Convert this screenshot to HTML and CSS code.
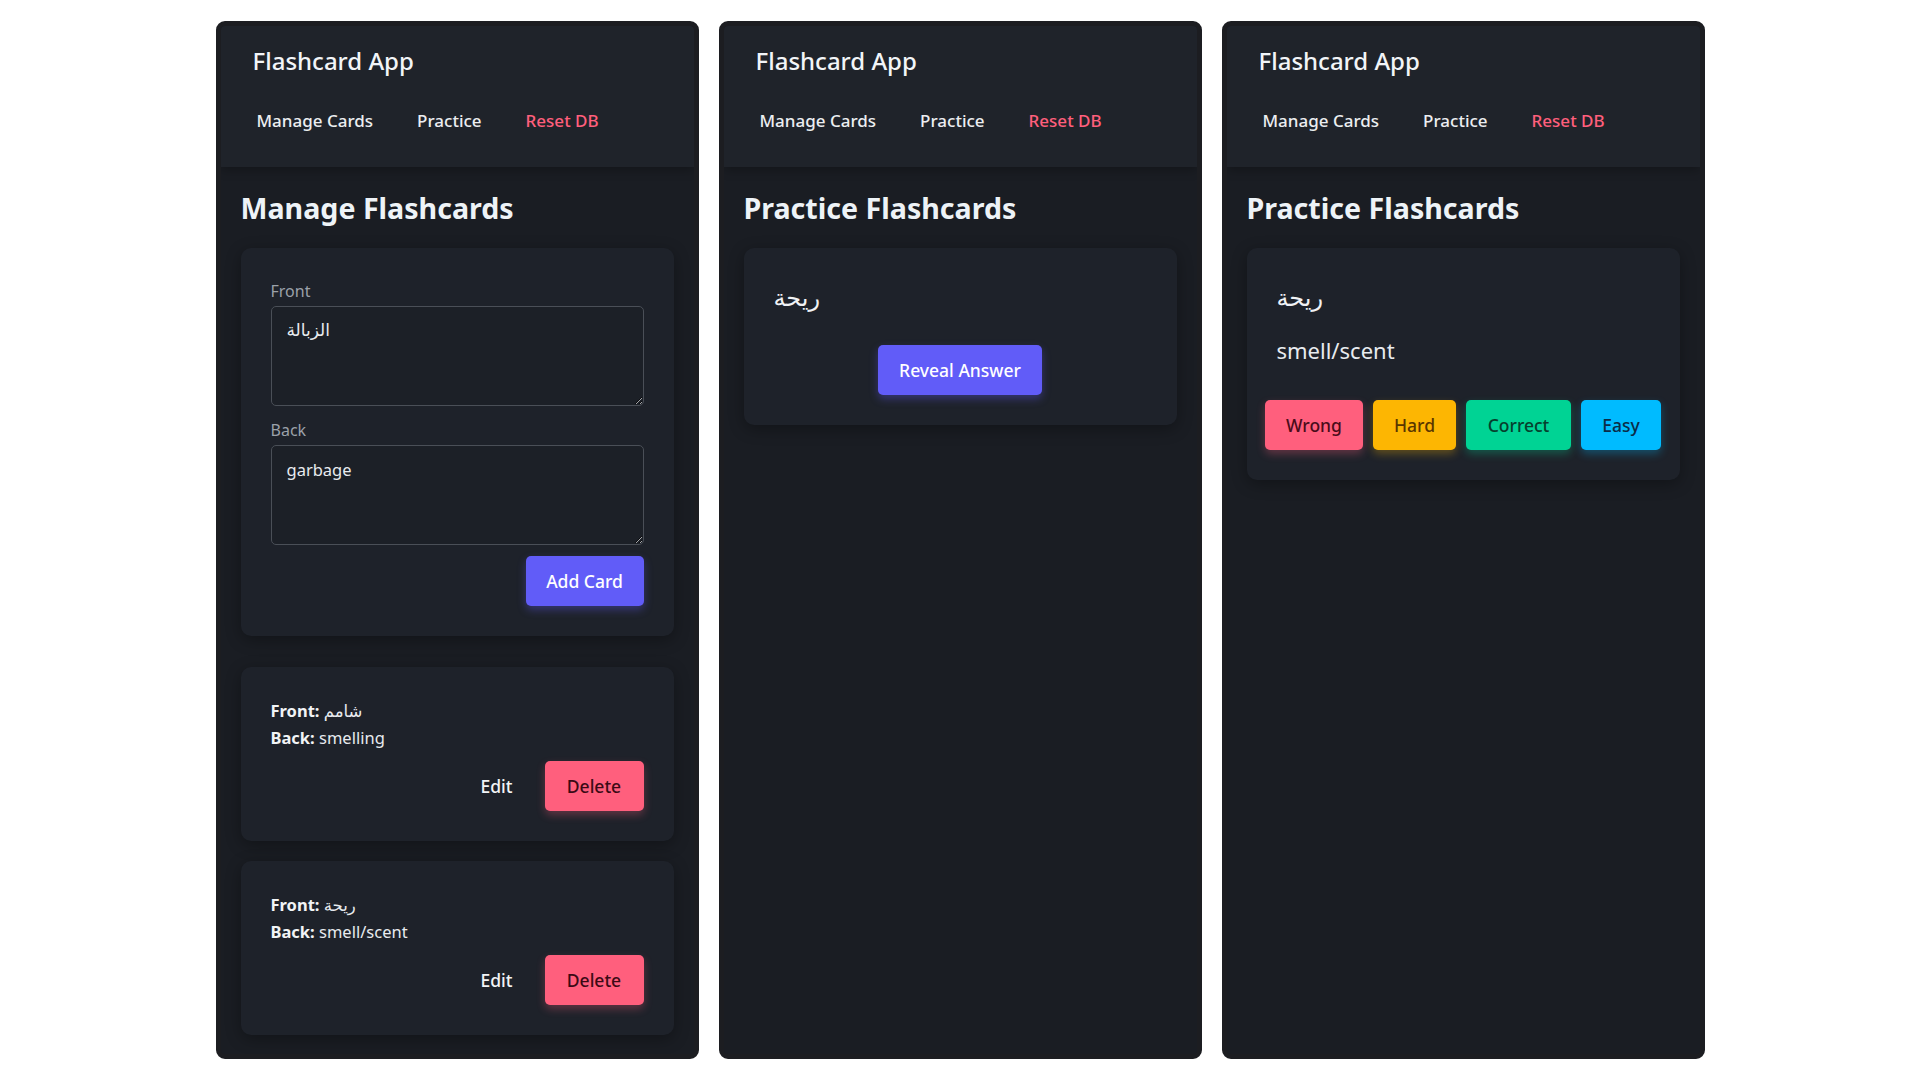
FILE: index.html
```html
<!DOCTYPE html>
<html lang="en">
<head>
<meta charset="utf-8">
<title>Flashcard App</title>
<link rel="stylesheet" href="styles.css">
</head>
<body>
<div class="stage">
  <section class="panel">
    <header class="app-header">
      <div class="app-title">Flashcard App</div>
      <nav class="nav">
        <a class="nav-link">Manage Cards</a>
        <a class="nav-link">Practice</a>
        <a class="nav-link danger">Reset DB</a>
      </nav>
    </header>
    <main class="main">
      <h2 class="page-title">Manage Flashcards</h2>
      <div class="card form-card">
        <label class="field-label">Front</label>
        <textarea class="field ar-field">الزبالة</textarea>
        <label class="field-label">Back</label>
        <textarea class="field">garbage</textarea>
        <div class="form-actions">
          <button class="btn btn-primary">Add Card</button>
        </div>
      </div>
      <div class="card list-card first">
        <div class="line"><b>Front:</b> <span class="ar">شامم</span></div>
        <div class="line"><b>Back:</b> smelling</div>
        <div class="row-actions">
          <button class="btn btn-ghost">Edit</button>
          <button class="btn btn-danger">Delete</button>
        </div>
      </div>
      <div class="card list-card">
        <div class="line"><b>Front:</b> <span class="ar">ريحة</span></div>
        <div class="line"><b>Back:</b> smell/scent</div>
        <div class="row-actions">
          <button class="btn btn-ghost">Edit</button>
          <button class="btn btn-danger">Delete</button>
        </div>
      </div>
    </main>
  </section>

  <section class="panel">
    <header class="app-header">
      <div class="app-title">Flashcard App</div>
      <nav class="nav">
        <a class="nav-link">Manage Cards</a>
        <a class="nav-link">Practice</a>
        <a class="nav-link danger">Reset DB</a>
      </nav>
    </header>
    <main class="main">
      <h2 class="page-title">Practice Flashcards</h2>
      <div class="card practice-card">
        <div class="word"><span class="ar">ريحة</span></div>
        <div class="center-row">
          <button class="btn btn-primary">Reveal Answer</button>
        </div>
      </div>
    </main>
  </section>

  <section class="panel">
    <header class="app-header">
      <div class="app-title">Flashcard App</div>
      <nav class="nav">
        <a class="nav-link">Manage Cards</a>
        <a class="nav-link">Practice</a>
        <a class="nav-link danger">Reset DB</a>
      </nav>
    </header>
    <main class="main">
      <h2 class="page-title">Practice Flashcards</h2>
      <div class="card practice-card">
        <div class="word"><span class="ar">ريحة</span></div>
        <div class="answer">smell/scent</div>
        <div class="grade-row">
          <button class="btn btn-wrong">Wrong</button>
          <button class="btn btn-hard">Hard</button>
          <button class="btn btn-correct">Correct</button>
          <button class="btn btn-easy">Easy</button>
        </div>
      </div>
    </main>
  </section>
</div>
</body>
</html>
```
FILE: styles.css
```css
* { box-sizing: border-box; }

html, body {
  margin: 0;
  padding: 0;
  background: #ffffff;
}

body {
  font-family: "Noto Sans", "DejaVu Sans", sans-serif;
  color: #e8ebef;
}

.ar {
  font-family: "DejaVu Sans", sans-serif;
  line-height: 1;
}

.stage {
  display: flex;
  justify-content: center;
  gap: 20px;
  padding-top: 21px;
}

.panel {
  width: 483px;
  height: 1038px;
  border: 5px solid #1c1d21;
  border-radius: 9px;
  background: #1a1d23;
  overflow: hidden;
  display: flex;
  flex-direction: column;
}

.app-header {
  height: 141px;
  background: #1f232a;
  padding: 19px 32px 0;
  box-shadow: 0 3px 10px rgba(0, 0, 0, 0.28);
  position: relative;
  z-index: 1;
}

.app-title {
  font-size: 24px;
  line-height: 32px;
  font-weight: 500;
  color: #f2f5f8;
}

.nav {
  display: flex;
  gap: 44px;
  margin-top: 32px;
  padding-left: 4px;
}

.nav-link {
  font-size: 17px;
  line-height: 24px;
  font-weight: 500;
  color: #eceef1;
}

.nav-link.danger { color: #ff5f7c; }

.main {
  padding: 21px 20px 0;
}

.page-title {
  margin: 0 0 20px;
  font-size: 28.6px;
  line-height: 40px;
  font-weight: 700;
  color: #eef3f7;
}

.card {
  background: #1e222a;
  border-radius: 10px;
  padding: 30px;
  box-shadow: 0 4px 16px rgba(0, 0, 0, 0.32);
}

.field-label {
  display: block;
  font-size: 16px;
  line-height: 26px;
  color: #9ba1a9;
  margin-bottom: 2px;
}

.field {
  display: block;
  width: 100%;
  height: 100px;
  margin: 0 0 11px;
  padding: 10px 15px;
  background: #1c2027;
  border: 1.5px solid #4a4f57;
  border-radius: 5px;
  color: #e8ebef;
  font-family: "Noto Sans", "DejaVu Sans", sans-serif;
  font-size: 16.5px;
  line-height: 27px;
}

.field.ar-field {
  font-family: "DejaVu Sans", sans-serif;
  font-size: 17px;
}

.form-actions {
  display: flex;
  justify-content: flex-end;
}

.btn {
  height: 50px;
  padding: 0 22px;
  border: none;
  border-radius: 5px;
  font-family: "Noto Sans", "DejaVu Sans", sans-serif;
  font-size: 17.5px;
  font-weight: 500;
  cursor: pointer;
}

.btn-primary {
  background: #615cf8;
  color: #ffffff;
  box-shadow: 0 4px 8px rgba(97, 92, 248, 0.35);
}

.form-card .btn-primary { width: 118px; padding: 0; }

.btn-ghost {
  background: transparent;
  color: #f2f4f6;
  padding: 0 20px;
}

.btn-danger {
  background: #ff5f7d;
  color: #3b0a15;
  width: 99px;
  padding: 0;
  box-shadow: 0 4px 8px rgba(255, 95, 125, 0.3);
}

.list-card { margin-top: 20px; }
.list-card.first { margin-top: 31px; }

.line {
  font-size: 16.5px;
  line-height: 27px;
  height: 27px;
  color: #e8ebef;
}

.line b {
  font-weight: 700;
  color: #f2f4f6;
}

.row-actions {
  display: flex;
  justify-content: flex-end;
  gap: 12px;
  margin-top: 10px;
}

.word {
  font-size: 24px;
  line-height: 37px;
  height: 44px;
  color: #f0f2f5;
  margin-bottom: 23px;
}

.center-row {
  display: flex;
  justify-content: center;
}

.center-row .btn { width: 164px; padding: 0; }

.practice-card .word + .answer { margin-top: -17px; }

.answer {
  font-size: 22px;
  line-height: 44px;
  font-weight: 400;
  color: #e8ebef;
  margin-bottom: 28px;
}

.grade-row {
  display: flex;
  justify-content: center;
  gap: 10px;
  margin: 0 -30px;
}

.btn-wrong {
  background: #ff5f7d;
  color: #4a0c1a;
  box-shadow: 0 4px 8px rgba(255, 95, 125, 0.3);
  width: 98px; padding: 0;
}

.btn-hard {
  background: #fdb602;
  color: #5a3600;
  box-shadow: 0 4px 8px rgba(253, 182, 2, 0.3);
  width: 83px; padding: 0;
}

.btn-correct {
  background: #00d394;
  color: #06402d;
  box-shadow: 0 4px 8px rgba(0, 211, 148, 0.3);
  width: 105px; padding: 0;
}

.btn-easy {
  background: #00bbff;
  color: #0b2b47;
  box-shadow: 0 4px 8px rgba(0, 187, 255, 0.3);
  width: 80px; padding: 0;
}
```
